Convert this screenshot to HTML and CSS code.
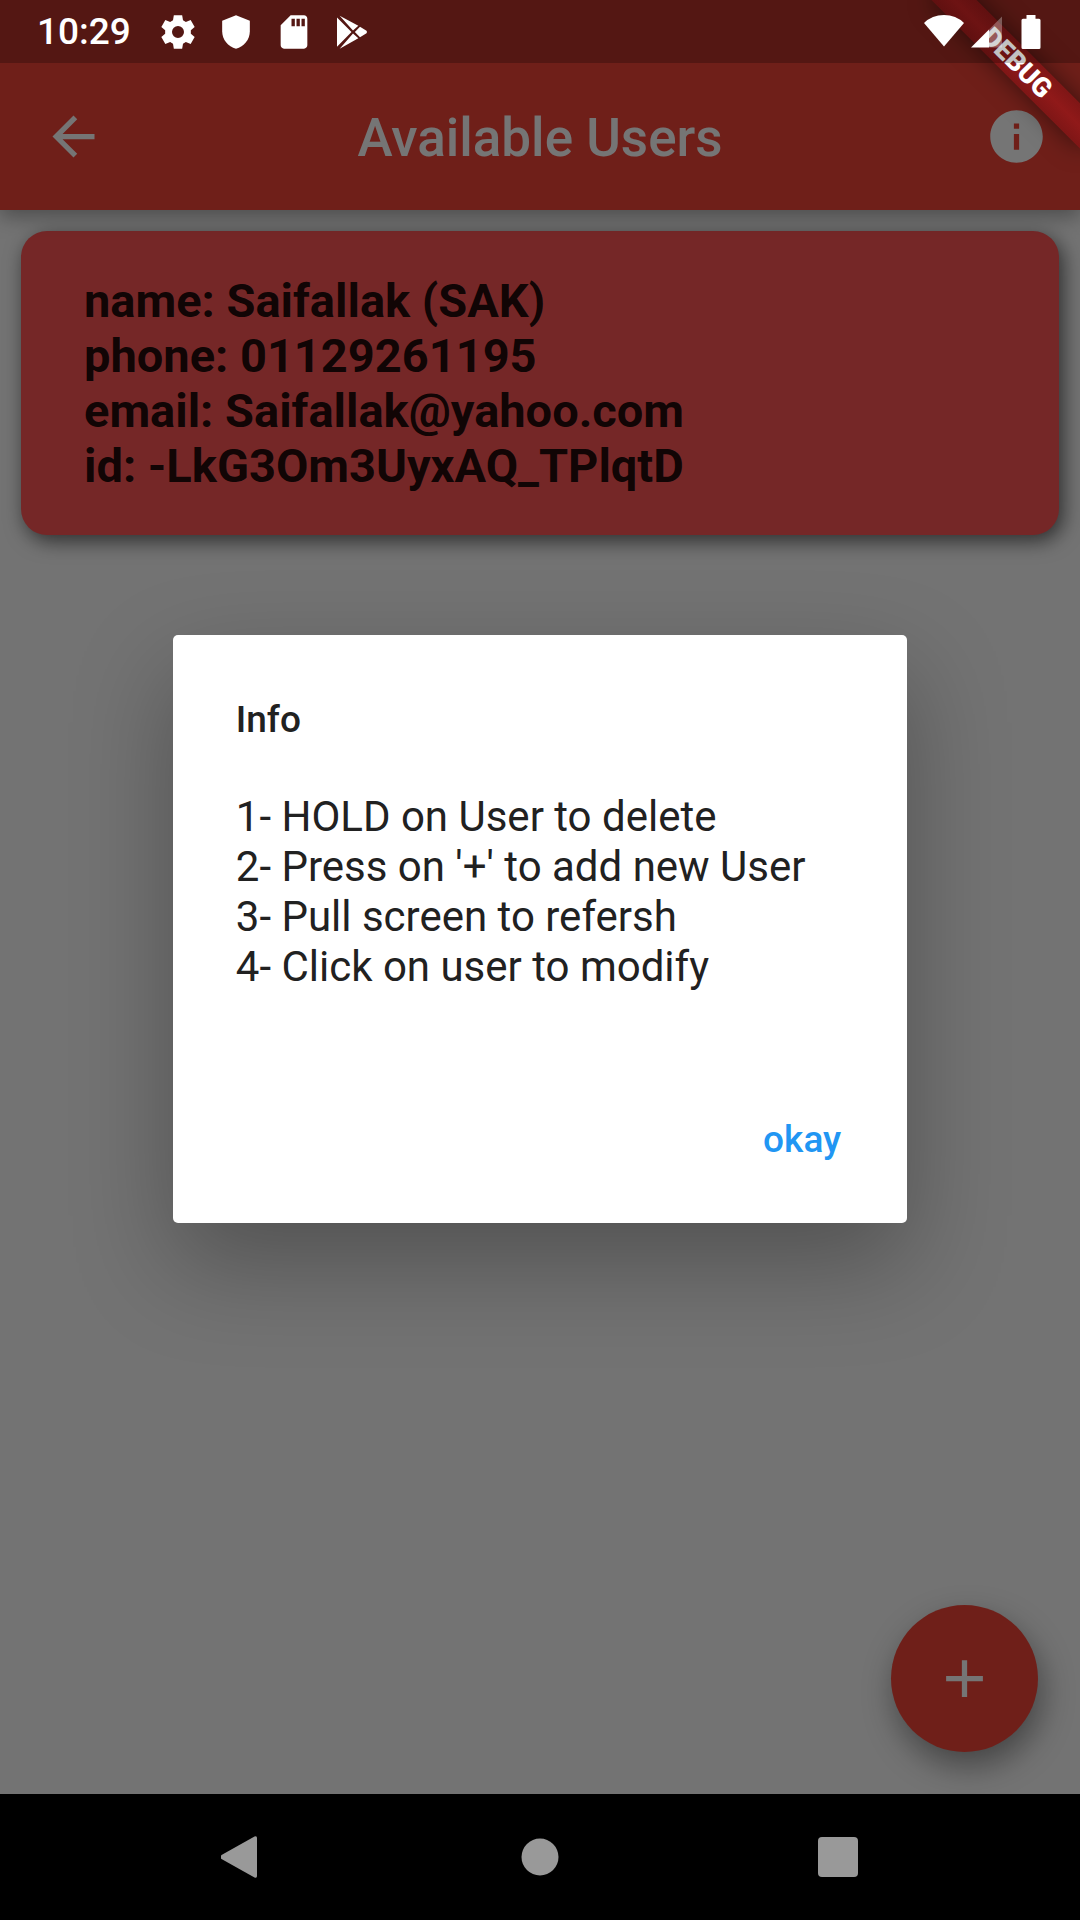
FILE: index.html
```html
<!DOCTYPE html>
<html lang="en">
<head>
<meta charset="utf-8">
<meta name="viewport" content="width=device-width, initial-scale=1">
<title>Available Users</title>
<link rel="stylesheet" href="styles.css">
</head>
<body>
<div class="screen">
  <header class="app-bar">
    <button class="icon-button" type="button" aria-label="Back">
      <svg class="icon" viewBox="0 0 24 24"><path d="M20 11H7.83l5.59-5.59L12 4l-8 8 8 8 1.41-1.41L7.83 13H20v-2z"/></svg>
    </button>
    <h1 class="app-title">Available Users</h1>
    <button class="icon-button icon-button-end" type="button" aria-label="Info">
      <svg class="icon" viewBox="0 0 24 24"><path d="M12 2C6.48 2 2 6.48 2 12s4.480 10 10 10 10-4.480 10-10S17.520 2 12 2zm1 15h-2v-6h2v6zm0-8h-2V7h2v2z"/></svg>
    </button>
  </header>

  <main class="content">
    <article class="user-card">
      <p>name: Saifallak (SAK)</p>
      <p>phone: 01129261195</p>
      <p>email: Saifallak@yahoo.com</p>
      <p>id: -LkG3Om3UyxAQ_TPlqtD</p>
    </article>
    <button class="fab" type="button" aria-label="Add user">
      <svg class="icon" viewBox="0 0 24 24"><path d="M19 13h-6v6h-2v-6H5v-2h6V5h2v6h6v2z"/></svg>
    </button>
  </main>

  <div class="backdrop">
    <section class="dialog" role="dialog" aria-modal="true" aria-labelledby="dialog-title">
      <h2 class="dialog-title" id="dialog-title">Info</h2>
      <div class="dialog-text">
        <p>1- HOLD on User to delete</p>
        <p>2- Press on '+' to add new User</p>
        <p>3- Pull screen to refersh</p>
        <p>4- Click on user to modify</p>
      </div>
      <div class="dialog-actions">
        <button class="text-button" type="button">okay</button>
      </div>
    </section>
  </div>

  <div class="ribbon-corner"><div class="ribbon">DEBUG</div></div>

  <div class="status-bar">
    <span class="clock">10:29</span>
    <div class="status-icons">
      <svg viewBox="0 0 24 24"><path fill-rule="evenodd" d="M9.500 2h5l.5 3 1.700 1 2.900-1.200L22 9l-2.300 2v2L22 15l-2.400 4.200L16.700 18 15 19l-.5 3h-5L9 19l-1.700-1-2.900 1.200L2 15l2.300-2v-2L2 9l2.400-4.200L7.300 6 9 5zM12 8.400a3.600 3.600 0 1 0 0 7.200 3.600 3.600 0 1 0 0-7.200z"/></svg>
      <svg viewBox="0 0 24 24"><path d="M12 2L3.700 5.200v6.300c0 5 3.500 9.200 8.300 10.500 4.800-1.300 8.300-5.500 8.300-10.500V5.200L12 2z"/></svg>
      <svg viewBox="0 0 24 24"><path d="M18 2h-8L4 8v12c0 1.100.9 2 2 2h12c1.100 0 2-.9 2-2V4c0-1.100-.9-2-2-2zm-5.500 6.500h-2v-4.500h2v4.500zm3 0h-2v-4.500h2v4.500zm3 0h-2v-4.500h2v4.500z"/></svg>
      <svg viewBox="0 0 24 24"><path d="M3 3.300V20.900L11.700 12zM4.600 2.200L12.600 11.100 15.800 8.300zM4.600 22L15.800 15.800 12.600 12.900zM16.800 8.900L13.700 12 16.800 15.200 20.700 12.800Q21.300 12 20.700 11.300z"/></svg>
    </div>
    <div class="signal-icons">
      <svg viewBox="0 0 40 40"><path d="M20 34.500L0 11Q8 3 20 3T40 11z"/></svg>
      <svg viewBox="0 0 32 40"><path d="M0 35.500L18 17.500V35.500z"/><path opacity=".3" d="M18 17.500L31 4.500V35.500H18z"/></svg>
      <svg viewBox="0 0 20 40"><path d="M5.500 3h9v3.700h3.500q1.500 0 1.500 1.500V35.500q0 1.500-1.500 1.500H2q-1.500 0-1.500-1.500V8.200q0-1.500 1.500-1.500h3.500z"/></svg>
    </div>
  </div>
</div>

<nav class="nav-bar" aria-label="System navigation">
  <button class="nav-button" type="button" aria-label="Back"><svg viewBox="0 0 42 42"><path d="M33.500 .5q2.500-1 2.500 1.500v38q0 2.500-2.500 1.500L.5 23Q-1.500 21 .5 19z"/></svg></button>
  <button class="nav-button" type="button" aria-label="Home"><svg viewBox="0 0 42 42"><circle cx="21" cy="21" r="18.500"/></svg></button>
  <button class="nav-button" type="button" aria-label="Recent apps"><svg viewBox="0 0 42 42"><rect x="1" y="1" width="40" height="40" rx="4"/></svg></button>
</nav>
</body>
</html>
```
FILE: styles.css
```css
* {
  box-sizing: border-box;
}

body {
  margin: 0;
  min-height: 100vh;
  display: flex;
  flex-direction: column;
  background: #000;
  font-family: Roboto, "Liberation Sans", sans-serif;
}

h1, h2, p {
  margin: 0;
}

button {
  border: 0;
  padding: 0;
  background: none;
  font: inherit;
  cursor: pointer;
}

svg {
  display: block;
  fill: currentColor;
}

.screen {
  position: relative;
  flex: 1;
  display: flex;
  flex-direction: column;
  overflow: hidden;
  background: #fafafa;
}

/* App bar */
.app-bar {
  position: relative;
  display: grid;
  grid-template-columns: 1fr auto 1fr;
  align-items: center;
  padding: 63px 32px 0;
  min-height: 210px;
  background: #f24538;
  color: #fff;
  box-shadow: 0 6px 20px rgba(0, 0, 0, 0.35);
}

.icon {
  width: 63px;
  height: 63px;
}

.icon-button {
  justify-self: start;
  margin-left: 10px;
  color: #fff;
}

.icon-button-end {
  justify-self: end;
}

.app-title {
  padding-top: 2px;
  font-size: 53px;
  line-height: 62px;
  font-weight: 500;
}

/* User list */
.content {
  flex: 1;
  display: flex;
  flex-direction: column;
  justify-content: space-between;
  padding: 21px 21px 42px;
}

.user-card {
  padding: 42px 63px;
  border-radius: 26px;
  background: #ff5555;
  box-shadow: 4px 6px 20px rgba(0, 0, 0, 0.6);
  color: rgba(0, 0, 0, 0.87);
  font-size: 47px;
  line-height: 55px;
  font-weight: 700;
}

.fab {
  align-self: flex-end;
  display: grid;
  place-items: center;
  width: 147px;
  height: 147px;
  margin-right: 21px;
  border-radius: 50%;
  background: #f24538;
  color: #fff;
  box-shadow: 4px 14px 32px rgba(0, 0, 0, 0.4);
}

/* Dialog */
.backdrop {
  position: absolute;
  inset: 0;
  display: grid;
  place-items: center;
  padding-top: 63px;
  background: rgba(0, 0, 0, 0.54);
}

.dialog {
  width: 68%;
  padding: 63px 42px 36px 63px;
  border-radius: 5px;
  background: #fff;
  box-shadow: 0 40px 100px rgba(0, 0, 0, 0.29);
  color: #212121;
}

.dialog-title {
  font-size: 37px;
  line-height: 44px;
  font-weight: 500;
}

.dialog-text {
  padding: 50px 0 101px;
  font-size: 42px;
  line-height: 50px;
}

.dialog-actions {
  display: flex;
  justify-content: flex-end;
}

.text-button {
  height: 94px;
  padding: 0 24px;
  color: #2196f3;
  font-size: 37px;
  line-height: 44px;
  font-weight: 500;
}

/* Corner ribbon */
.ribbon-corner {
  position: absolute;
  top: 0;
  right: 0;
  width: 240px;
  height: 240px;
  overflow: hidden;
}

.ribbon {
  position: absolute;
  top: 47px;
  right: -42px;
  width: 210px;
  background: linear-gradient(#7f1616, #901919 50%, #7f1616);
  box-shadow: 0 0 24px rgba(0, 0, 0, 0.5);
  color: #fff;
  font-size: 27px;
  line-height: 32px;
  font-weight: 900;
  text-align: center;
  transform: rotate(45deg);
}

/* Status bar */
.status-bar {
  position: absolute;
  top: 0;
  left: 0;
  right: 0;
  height: 63px;
  display: flex;
  align-items: center;
  padding: 0 39px 0 37px;
  background: rgba(0, 0, 0, 0.24);
  color: #fff;
}

.clock {
  font-size: 37px;
  line-height: 44px;
  font-weight: 500;
}

.status-icons {
  display: flex;
  gap: 18px;
  margin-left: 27px;
}

.status-icons svg {
  width: 40px;
  height: 40px;
}

.signal-icons {
  display: flex;
  margin-left: auto;
  align-items: center;
  gap: 7px;
}

.signal-icons svg {
  height: 40px;
}

.signal-icons svg:last-child {
  margin-left: 11px;
}

/* System navigation */
.nav-bar {
  display: grid;
  grid-template-columns: repeat(3, 1fr);
  align-items: center;
  height: 126px;
  padding: 0 93px;
  background: #000;
}

.nav-button {
  display: grid;
  place-items: center;
  height: 100%;
  color: #999;
}

.nav-button svg {
  width: 42px;
  height: 42px;
}
```
